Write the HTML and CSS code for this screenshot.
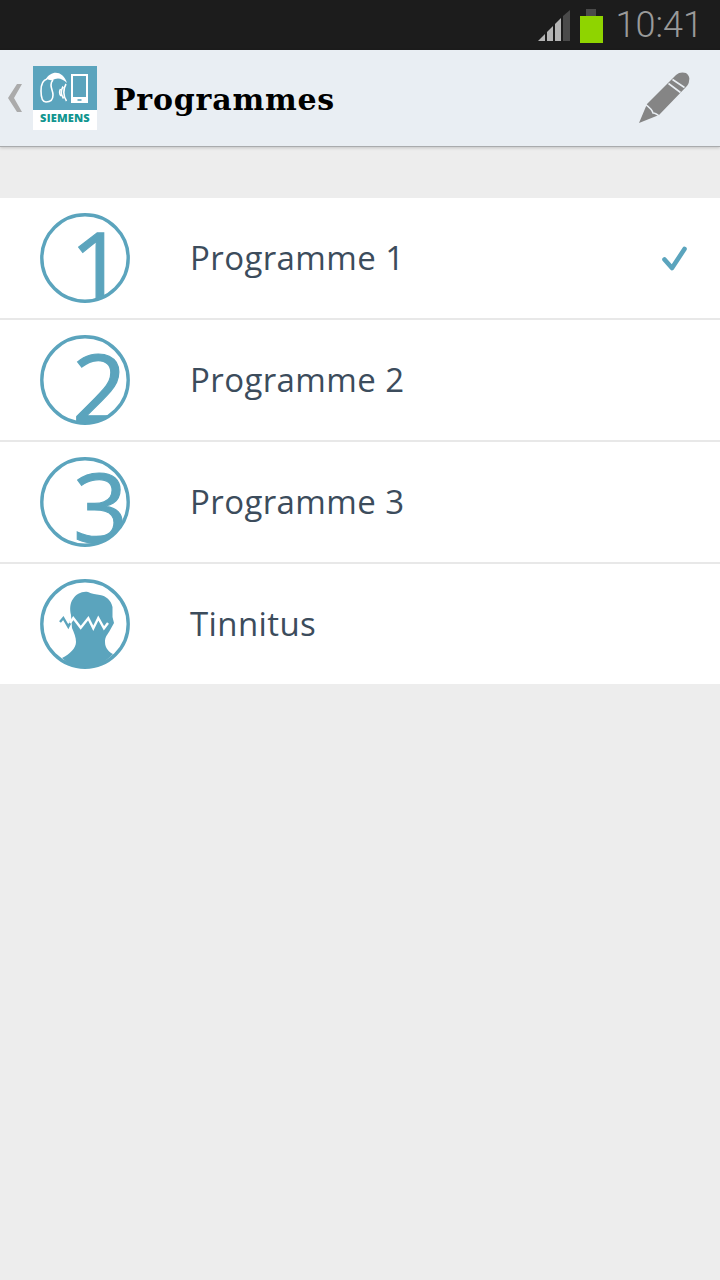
FILE: index.html
```html
<!doctype html>
<html lang="fr">
<head>
  <meta charset="UTF-8">
  <meta name="viewport" content="width=device-width, initial-scale=1.0">
  <title>Programmes</title>
  <link rel="stylesheet" href="styles.css">
</head>
<body>
  <div class="status-bar">
    <svg class="signal" viewBox="0 0 34 34" width="34" height="34">
      <polygon points="0,32 7,25 7,32" fill="#b4b4b4"/>
      <polygon points="9,32 9,23 15,17 15,32" fill="#b4b4b4"/>
      <polygon points="17,32 17,15 23,9 23,32" fill="#b4b4b4"/>
      <polygon points="25,32 25,7 32,1 32,32" fill="#4a4a4a"/>
    </svg>
    <div class="battery">
      <div class="battery-cap"></div>
      <div class="battery-level"></div>
    </div>
    <div class="clock">10:41</div>
  </div>

  <div class="action-bar">
    <svg class="back" viewBox="0 0 16 30" width="16" height="30">
      <polygon points="10,1 15,1 7,15 15,29 10,29 1,15" fill="#ababab"/>
    </svg>
    <div class="logo">
      <svg class="logo-art" viewBox="0 0 64 44" width="64" height="44">
        <!-- hearing aid -->
        <path d="M14 13 C10 14 8 19 8 25 C8 32 10 36 13 36 C17 36 20 34 20 29 C20 25 18 23 18 19 C18 17 19 15 20 14" fill="none" stroke="#fff" stroke-width="1.6"/>
        <path d="M13 13 C18 4 30 4 34 17 C29 12 24 11 19 14.500 Z" fill="#fff"/>
        <!-- waves -->
        <path d="M27.500 23 C26.500 25 26.500 28 28 30 M30 20.500 C28 24 28 29 30.500 32.500 M33 18 C30 23 30 30 33.500 35" fill="none" stroke="#fff" stroke-width="1.6"/>
        <!-- phone -->
        <rect x="39" y="9" width="15" height="27" fill="none" stroke="#fff" stroke-width="2"/>
        <rect x="38" y="31" width="17" height="6" fill="#fff"/>
        <rect x="44.500" y="33.200" width="4" height="1.600" fill="#5ba4bd"/>
      </svg>
      <div class="logo-name">SIEMENS</div>
    </div>
    <h1 class="title">Programmes</h1>
    <svg class="edit" viewBox="0 0 52 52" width="52" height="52">
      <!-- pencil, drawn along its diagonal, with the bands cut out in the bar colour -->
      <path d="M0 51 L8 32 L37 3 C40 0 44 0 47 1 C50 3 51 6 50 9 C50 11 49 13 47 15 L20 43 Z" fill="#858585"/>
      <path d="M6 32 C10 35 13 37 14 41 C17 41 19 43 21 45" fill="none" stroke="#e9eef3" stroke-width="1.5"/>
      <path d="M29.500 11.500 L41.500 20.500 M33.500 7.500 L45.500 15.500" fill="none" stroke="#e9eef3" stroke-width="1.6"/>
    </svg>
  </div>

  <ul class="program-list">
    <li class="program">
      <svg class="program-icon" viewBox="0 0 90 90" width="90" height="90">
        <clipPath id="disc"><circle cx="45" cy="45" r="44"/></clipPath>
        <circle class="ring" cx="45" cy="45" r="43.200"/>
        <g clip-path="url(#disc)"><text class="digit" x="30" y="88">1</text></g>
      </svg>
      <span class="program-name">Programme 1</span>
      <svg class="check" viewBox="0 0 28 28" width="28" height="28">
        <polyline points="4.500,15.500 12,24 24.500,5" fill="none" stroke="#5ba4bd" stroke-width="4.600" stroke-linecap="round" stroke-linejoin="round"/>
      </svg>
    </li>
    <li class="program">
      <svg class="program-icon" viewBox="0 0 90 90" width="90" height="90">
        <circle class="ring" cx="45" cy="45" r="43.200"/>
        <g clip-path="url(#disc)"><text class="digit" x="32" y="88">2</text></g>
      </svg>
      <span class="program-name">Programme 2</span>
    </li>
    <li class="program">
      <svg class="program-icon" viewBox="0 0 90 90" width="90" height="90">
        <circle class="ring" cx="45" cy="45" r="43.200"/>
        <g clip-path="url(#disc)"><text class="digit" x="33" y="85">3</text></g>
      </svg>
      <span class="program-name">Programme 3</span>
    </li>
    <li class="program">
      <svg class="program-icon" viewBox="0 0 90 90" width="90" height="90">
        <circle class="ring" cx="45" cy="45" r="43.200"/>
        <!-- head and shoulders -->
        <path d="M48 13 C42 12 36 15 33 20 C30 24 29.500 30 31 36 L32 49 C34 54 36 58 36 63 C36 69 30 75 22 79 C28 85 36 88 45 88 C55 88 66 83 73 75 C69 73 65 69 65 63 C65 58 67 56 69 53 L74 44 L72.500 38 L72.500 28 C71 21 66 17 60 16 C56 15 52 15 48 13 Z" fill="#5ba4bd"/>
        <polyline class="zig" points="20,43 23.300,39 28.300,47.700 31,42.500" stroke="#5ba4bd"/>
        <polyline class="zig" points="30,44 33.300,39 40.700,48.700 48.300,39.300 53.300,49.300 58.300,39 64,49.300 68,44" stroke="#fff"/>
      </svg>
      <span class="program-name">Tinnitus</span>
    </li>
  </ul>
</body>
</html>
```

FILE: styles.css
```css
html, body {
  margin: 0;
  padding: 0;
}

body {
  width: 720px;
  height: 1280px;
  background: #ededed;
  font-family: 'Open Sans', Arial, sans-serif;
  overflow: hidden;
}

.status-bar {
  height: 50px;
  background: #1c1c1c;
  display: flex;
  align-items: center;
  justify-content: flex-end;
  padding-right: 17px;
  box-sizing: border-box;
}

.signal {
  margin-right: 8px;
  margin-top: 2px;
}

.battery {
  width: 23px;
  display: flex;
  flex-direction: column;
  align-items: center;
  margin-right: 13px;
  margin-top: 1px;
}

.battery-cap {
  width: 10px;
  height: 7px;
  background: #4a4a4a;
}

.battery-level {
  width: 23px;
  height: 27px;
  background: #8fd400;
}

.clock {
  font-family: Roboto, Arial, sans-serif;
  font-weight: 300;
  font-size: 36px;
  line-height: 50px;
  color: #9a9a9a;
}

.action-bar {
  height: 97px;
  box-sizing: border-box;
  background: #e9eef3;
  border-bottom: 1px solid #a9abad;
  box-shadow: 0 1px 3px rgba(0, 0, 0, 0.18);
  display: flex;
  align-items: center;
  padding: 0 29px 0 7px;
}

.back {
  margin-right: 10px;
}

.logo {
  width: 64px;
  height: 64px;
  background: #fff;
  margin-right: 16px;
  flex-shrink: 0;
}

.logo-art {
  display: block;
  background: #5ba4bd;
}

.logo-name {
  font-family: 'Open Sans', Arial, sans-serif;
  font-weight: 800;
  font-size: 11px;
  line-height: 16px;
  letter-spacing: 0.2px;
  text-align: center;
  color: #12958f;
}

.title {
  flex: 1;
  margin: 2px 0 0;
  font-family: 'DejaVu Serif', 'Liberation Serif', serif;
  font-weight: 700;
  font-size: 30px;
  letter-spacing: 0.8px;
  color: #000;
}

.program-list {
  list-style: none;
  margin: 51px 0 0;
  padding: 0;
}

.program {
  height: 122px;
  box-sizing: border-box;
  background: #fff;
  border-bottom: 2px solid #e8e8e8;
  display: flex;
  align-items: center;
  padding: 0 32px 0 40px;
}

.program:last-child {
  border-bottom: none;
  height: 120px;
}

.program-icon {
  margin-right: 60px;
  flex-shrink: 0;
  overflow: visible;
}

.ring {
  fill: none;
  stroke: #5ba4bd;
  stroke-width: 3.4;
}

.digit {
  font-family: 'Open Sans', Arial, sans-serif;
  font-weight: 400;
  font-size: 96px;
  fill: #5ba4bd;
  stroke: #5ba4bd;
  stroke-width: 1.2;
}

.zig {
  fill: none;
  stroke-width: 2.4;
}

.program-name {
  flex: 1;
  margin-top: -2px;
  font-size: 33px;
  letter-spacing: 0.4px;
  color: #3c4c5c;
}
```
